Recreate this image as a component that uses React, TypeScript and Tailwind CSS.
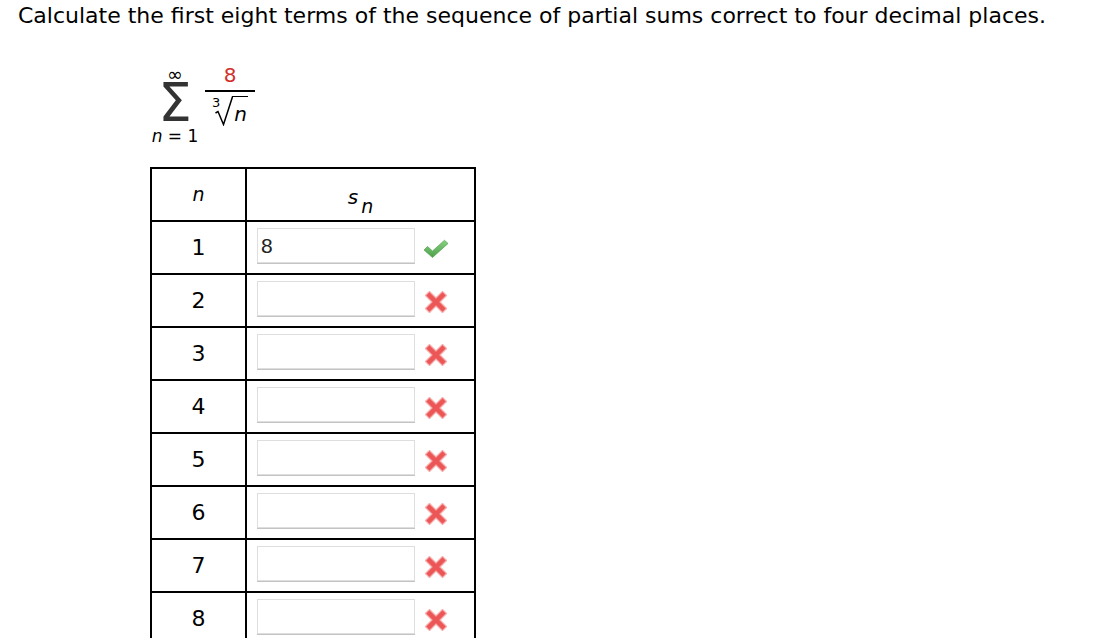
import React from 'react';

const ROWS = [1, 2, 3, 4, 5, 6, 7, 8];

function CheckIcon() {
  return (
    <svg width="27" height="20" viewBox="0 0 26 19" className="mt-[3px]">
      <defs>
        <linearGradient id="chk" x1="0" y1="0" x2="0" y2="1">
          <stop offset="0" stopColor="#8ad184" />
          <stop offset="1" stopColor="#4c9f48" />
        </linearGradient>
      </defs>
      <path
        d="M1 10.5 L4.5 7 L9.5 11.5 L21.5 0.8 L25 4 L9.5 18 Z"
        fill="url(#chk)"
        stroke="#5aa956"
        strokeWidth="0.8"
        strokeLinejoin="round"
      />
    </svg>
  );
}

function CrossIcon() {
  return (
    <svg width="22" height="22" viewBox="0 0 22 22" className="mt-[2px]">
      <g stroke="#f39292" strokeWidth="7" strokeLinecap="square" opacity="0.75">
        <line x1="4.5" y1="4.5" x2="17.5" y2="17.5" />
        <line x1="17.5" y1="4.5" x2="4.5" y2="17.5" />
      </g>
      <g stroke="#ec5656" strokeWidth="4.5" strokeLinecap="square">
        <line x1="4.5" y1="4.5" x2="17.5" y2="17.5" />
        <line x1="17.5" y1="4.5" x2="4.5" y2="17.5" />
      </g>
    </svg>
  );
}

export default function App() {
  return (
    <div className="w-[1108px] h-[638px] overflow-hidden bg-white text-black font-['DejaVu_Sans',sans-serif]">
      <p className="pl-[18px] pt-[3px] text-[22px] leading-[26px] whitespace-nowrap">
        Calculate the first eight terms of the sequence of partial sums correct to four decimal places.
      </p>

      {/* series */}
      <div className="ml-[150px] mt-[36px] flex items-start h-[80px]">
        <div className="w-[50px] flex flex-col items-center">
          <span className="mt-[1px] h-[17px] text-[19px] leading-[17px]">∞</span>
          <span className="h-[40px] text-[53px] leading-[40px] text-[#333]">Σ</span>
          <span className="mt-[5px] text-[17px] leading-[17px] whitespace-nowrap">
            <i>n</i> = 1
          </span>
        </div>
        <div className="ml-[5px] w-[50px] flex flex-col items-center">
          <span className="text-[20px] leading-[20px] text-[#d12f2a]">8</span>
          <div className="mt-[5px] w-full h-[2px] bg-black" />
          <div className="mt-[4px] flex items-start">
            <span className="text-[13px] leading-[13px]">3</span>
            <svg width="18" height="30" viewBox="0 0 18 30" className="-ml-[5px]">
              <path
                d="M0.5 17 L3 15.5 L8.5 28.5 L17.5 0.75 L18 0.75"
                fill="none"
                stroke="black"
                strokeWidth="1.5"
                strokeLinejoin="miter"
              />
            </svg>
            <span className="border-t-[1.5px] border-black pt-[7px] px-[1px] text-[20px] leading-[20px] italic">
              n
            </span>
          </div>
        </div>
      </div>

      {/* table */}
      <div className="ml-[150px] mt-[22px] w-[326px] border-2 border-black">
        <div className="flex h-[51px]">
          <div className="w-[93px] flex items-center justify-center text-[19px] leading-[19px] italic">n</div>
          <div className="flex-1 border-l-2 border-black flex items-center justify-center">
            <div className="pt-[13px] flex items-start italic">
              <span className="text-[20px] leading-[19px]">s</span>
              <span className="ml-[3px] mt-[9px] text-[19px] leading-[18px]">n</span>
            </div>
          </div>
        </div>
        {ROWS.map((n) => (
          <div key={n} className="flex h-[53px] border-t-2 border-black">
            <div className="w-[93px] flex items-center justify-center text-[22px] leading-[22px]">{n}</div>
            <div className="flex-1 border-l-2 border-black flex items-start pl-[10px]">
              <input
                type="text"
                readOnly
                defaultValue={n === 1 ? '8' : ''}
                className="mt-[6px] w-[158px] h-[35px] px-[3px] border border-[#dedede] shadow-[0_1px_0_#c4c4c4] bg-white outline-none text-[21px] text-[#222] font-['Liberation_Sans',Arial,sans-serif]"
              />
              <div className="ml-[8px] w-[26px] h-[51px] flex items-center justify-center">
                {n === 1 ? <CheckIcon /> : <CrossIcon />}
              </div>
            </div>
          </div>
        ))}
      </div>
    </div>
  );
}
